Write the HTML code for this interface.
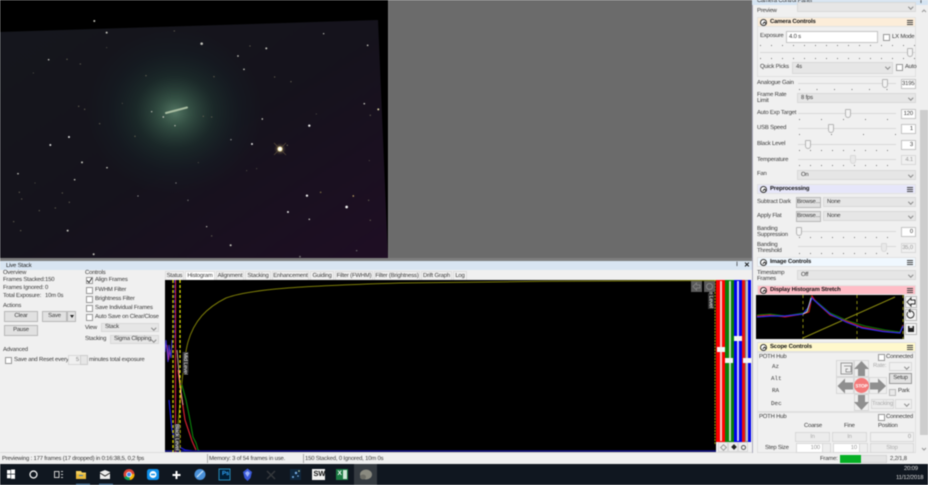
<!DOCTYPE html>
<html><head><meta charset="utf-8"><style>
html,body{margin:0;padding:0;background:#f0f0f0;}
#p{position:relative;width:928px;height:485px;overflow:hidden;background:#f0f0f0;font:5.9px/8px "Liberation Sans",sans-serif;letter-spacing:-.17px;color:#3a3a3a;text-rendering:geometricPrecision;filter:blur(.42px);}
#p div,#p span,#p svg{position:absolute;box-sizing:border-box;}
.t{white-space:nowrap;}
.b{font-weight:bold;color:#111;}
.m{font-family:"Liberation Mono",monospace;letter-spacing:0;}
.cb{background:#e6e6e6;border:1px solid #d8d8d8;padding-left:3px;line-height:8px;white-space:nowrap;}
.cb::after{content:"";position:absolute;right:3px;top:2px;width:2.5px;height:2.5px;border-right:1px solid #888;border-bottom:1px solid #888;transform:rotate(45deg);}
.in{background:#fff;border:1px solid #c4c4c4;text-align:right;padding-right:2px;line-height:8px;white-space:nowrap;}
.dis{background:#f0f0f0;border-color:#d8d8d8;color:#999;}
.btn{background:#e1e1e1;border:1px solid #b8b8b8;text-align:center;white-space:nowrap;}
.dbtn{background:#ececec;border:1px solid #d8d8d8;color:#aaa;text-align:center;line-height:8px;white-space:nowrap;}
.ck{width:7px;height:7px;background:#fff;border:1px solid #999;}
.tr{height:1px;background:#d8d8d8;}
.th{width:6px;height:9px;background:#f3f3f3;border:1px solid #b4b4b4;border-radius:1px 1px 3px 3px;}
.tk{height:1px;background:repeating-linear-gradient(90deg,#777 0 1px,transparent 1px 11px);}
.hd{left:757px;width:159px;height:10px;border:1px solid #e2e2e2;}
.hd .o{left:2px;top:1px;width:7px;height:7px;border:1px solid #333;border-radius:50%;background:#fff;}
.hd .o::after{content:"";position:absolute;left:1.5px;top:2px;width:2px;height:2px;border-left:1px solid #333;border-top:1px solid #333;transform:rotate(45deg);}
.hd .n{left:12px;top:0;line-height:8px;font-weight:bold;color:#111;white-space:nowrap;letter-spacing:-.12px;}
.hd .h{left:149px;top:2px;width:6px;height:5px;border-top:1px solid #444;border-bottom:1px solid #444;}
.hd .h::after{content:"";position:absolute;left:0;right:0;top:1px;height:1px;background:#444;}
.tab{top:271px;height:9px;background:#f0f0f0;border:1px solid #dedede;border-bottom:none;text-align:center;line-height:8px;white-space:nowrap;}
.box{border:1px solid #e0e0e0;}
.cell{background:#eee;border:1px solid #d8d8d8;}
</style></head><body><div id="p">

<!-- Image region -->
<svg style="left:0;top:0" width="389" height="258" viewBox="0 0 389 258">
<defs>
<linearGradient id="bg" x1="0" y1="0" x2="1" y2="1"><stop offset="0" stop-color="#15171d"/><stop offset=".5" stop-color="#15131c"/><stop offset="1" stop-color="#1f0e24"/></linearGradient>
<radialGradient id="glow" cx=".5" cy=".5" r=".5"><stop offset="0" stop-color="#567a66" stop-opacity=".95"/><stop offset=".18" stop-color="#3a5c4c" stop-opacity=".8"/><stop offset=".45" stop-color="#1f3832" stop-opacity=".55"/><stop offset=".75" stop-color="#15262a" stop-opacity=".25"/><stop offset="1" stop-color="#16282a" stop-opacity="0"/></radialGradient>
<radialGradient id="sg"><stop offset="0" stop-color="#fff6c0" stop-opacity=".55"/><stop offset="1" stop-color="#a08040" stop-opacity="0"/></radialGradient>
</defs>
<rect width="389" height="258" fill="#000"/>
<polygon points="0,32 378,20 388,258 0,258" fill="url(#bg)"/>
<ellipse cx="175" cy="112" rx="88" ry="82" fill="url(#glow)"/>
<line x1="166" y1="113" x2="187" y2="107.500" stroke="#a8bca0" stroke-width="2" stroke-linecap="round"/>
<g transform="scale(.3333)" fill="#c0c0b8">
<circle cx="283" cy="63" r="3"/><circle cx="320" cy="98" r="3"/><circle cx="605" cy="131" r="4"/><circle cx="799" cy="145" r="3"/><circle cx="146" cy="179" r="2.500"/><circle cx="714" cy="168" r="2.500"/><circle cx="732" cy="208" r="2.500"/><circle cx="1103" cy="136" r="2.500"/><circle cx="971" cy="101" r="2"/><circle cx="1093" cy="311" r="2.500"/><circle cx="1135" cy="328" r="3" fill="#d8d0a0"/><circle cx="787" cy="357" r="2.500"/><circle cx="928" cy="377" r="3.500" fill="#eee"/><circle cx="756" cy="432" r="3" fill="#ddd"/><circle cx="207" cy="411" r="3" fill="#ddd"/><circle cx="151" cy="435" r="3" fill="#ddd"/><circle cx="246" cy="487" r="3"/><circle cx="321" cy="503" r="2.500"/><circle cx="54" cy="521" r="2.500"/><circle cx="224" cy="539" r="2.500"/><circle cx="490" cy="351" r="2.500"/><circle cx="525" cy="377" r="2"/><circle cx="455" cy="335" r="2"/><circle cx="693" cy="419" r="2" fill="#999"/><circle cx="921" cy="587" r="3.500" fill="#eee"/><circle cx="1040" cy="621" r="4" fill="#f4f4f4"/><circle cx="864" cy="636" r="3" fill="#ddd"/><circle cx="928" cy="658" r="2.500"/><circle cx="1060" cy="588" r="2.500" fill="#b09860"/><circle cx="962" cy="577" r="2.500" fill="#706240"/><circle cx="203" cy="692" r="3"/><circle cx="281" cy="763" r="3"/><circle cx="692" cy="736" r="3"/><circle cx="620" cy="680" r="2"/><circle cx="414" cy="588" r="2" fill="#999"/><circle cx="528" cy="549" r="2" fill="#888"/><circle cx="564" cy="601" r="2" fill="#777"/><circle cx="1070" cy="752" r="2" fill="#777"/><circle cx="900" cy="770" r="2.500" fill="#777"/>
<g fill="#625e50"><circle cx="201" cy="178" r="2"/><circle cx="241" cy="192" r="2"/><circle cx="750" cy="138" r="2"/><circle cx="824" cy="231" r="2"/><circle cx="873" cy="245" r="2"/><circle cx="642" cy="230" r="2"/><circle cx="236" cy="319" r="2"/><circle cx="254" cy="328" r="2"/><circle cx="299" cy="371" r="2"/><circle cx="610" cy="349" r="2"/><circle cx="635" cy="351" r="2"/><circle cx="1111" cy="346" r="2"/><circle cx="862" cy="436" r="2"/><circle cx="1111" cy="661" r="2"/><circle cx="1106" cy="601" r="2"/><circle cx="635" cy="708" r="2"/><circle cx="187" cy="579" r="2"/><circle cx="58" cy="577" r="2"/><circle cx="65" cy="597" r="2"/><circle cx="41" cy="665" r="2"/><circle cx="62" cy="692" r="2"/><circle cx="166" cy="624" r="2"/><circle cx="118" cy="632" r="2"/><circle cx="208" cy="607" r="2"/><circle cx="438" cy="227" r="2"/><circle cx="523" cy="93" r="2"/><circle cx="405" cy="409" r="2"/><circle cx="100" cy="219" r="1.500"/><circle cx="105" cy="549" r="1.500"/><circle cx="320" cy="143" r="1.500"/><circle cx="367" cy="310" r="1.500"/><circle cx="595" cy="488" r="1.500"/><circle cx="740" cy="512" r="1.500"/><circle cx="770" cy="506" r="1.500"/><circle cx="1108" cy="482" r="1.500"/><circle cx="949" cy="342" r="1.500"/></g>
<circle cx="840" cy="447" r="18" fill="url(#sg)"/>
<path d="M822 429L858 465M858 429L822 465" stroke="#6a5c40" stroke-width="1.600"/>
<circle cx="840" cy="447" r="8" fill="#d8c880"/><circle cx="840" cy="447" r="5.500" fill="#fff"/>
</g>
</svg>
<div style="left:388px;top:0;width:364px;height:258px;background:#6b6b6b"></div>
<div style="left:388px;top:0;width:1px;height:258px;background:#777"></div>
<div style="left:0;top:258px;width:752px;height:3px;background:#7e7e7e"></div>

<!-- Live stack panel -->
<div style="left:0;top:261px;width:752px;height:9px;background:#d8e5f2"></div>
<div class="t" style="left:6px;top:262px;color:#222">Live Stack</div>
<div class="t b" style="left:736px;top:261px">⁞</div>
<div class="t b" style="left:744px;top:262px;font-size:7px">✕</div>

<div class="t" style="left:3px;top:269px">Overview</div>
<div class="t" style="left:3px;top:276px">Frames Stacked:</div><div class="t" style="left:45px;top:276px">150</div>
<div class="t" style="left:3px;top:284px">Frames Ignored:</div><div class="t" style="left:45px;top:284px">0</div>
<div class="t" style="left:3px;top:292px">Total Exposure:</div><div class="t" style="left:45px;top:292px">10m 0s</div>
<div class="t" style="left:3px;top:302px">Actions</div>
<div class="btn" style="left:4px;top:311px;width:34px;height:11px;line-height:9px">Clear</div>
<div class="btn" style="left:42px;top:311px;width:25px;height:11px;line-height:9px">Save</div>
<div class="btn" style="left:67px;top:311px;width:9px;height:11px"><span style="left:2px;top:3px;width:0;height:0;border:2.500px solid transparent;border-top:3px solid #222"></span></div>
<div class="btn" style="left:4px;top:325px;width:34px;height:11px;line-height:9px">Pause</div>
<div class="t" style="left:3px;top:346px">Advanced</div>
<div class="ck" style="left:5px;top:357px"></div>
<div class="t" style="left:14px;top:356px">Save and Reset every</div>
<div class="in dis" style="left:68px;top:355px;width:20px;height:10px;padding-right:8px;color:#888">5</div>
<div style="left:80px;top:355px;width:8px;height:10px;background:#e6e6e6;border:1px solid #ccc"></div>
<div class="t" style="left:89px;top:356px">minutes total exposure</div>

<div class="t" style="left:85px;top:269px">Controls</div>
<div class="ck" style="left:86px;top:277px"></div><div class="t" style="left:95px;top:276px">Align Frames</div>
<svg style="left:86px;top:277px" width="7" height="7"><path d="M1 3.500L3 5.500L6 1" fill="none" stroke="#333" stroke-width="1"/></svg>
<div class="ck" style="left:86px;top:287px"></div><div class="t" style="left:95px;top:286px">FWHM Filter</div>
<div class="ck" style="left:86px;top:296px"></div><div class="t" style="left:95px;top:295px">Brightness Filter</div>
<div class="ck" style="left:86px;top:305px"></div><div class="t" style="left:95px;top:304px">Save Individual Frames</div>
<div class="ck" style="left:86px;top:314px"></div><div class="t" style="left:95px;top:313px">Auto Save on Clear/Close</div>
<div class="t" style="left:85px;top:324px">View</div>
<div class="cb" style="left:101px;top:323px;width:58px;height:9px;line-height:7px">Stack</div>
<div class="t" style="left:85px;top:335px">Stacking</div>
<div class="cb" style="left:110px;top:335px;width:49px;height:9px;line-height:7px">Sigma Clipping</div>

<!-- Tabs -->
<div class="tab" style="left:165px;width:19px">Status</div>
<div class="tab" style="left:185px;width:30px;background:#fff">Histogram</div>
<div class="tab" style="left:216px;width:28px">Alignment</div>
<div class="tab" style="left:245px;width:26px">Stacking</div>
<div class="tab" style="left:272px;width:37px">Enhancement</div>
<div class="tab" style="left:310px;width:24px">Guiding</div>
<div class="tab" style="left:335px;width:38px">Filter (FWHM)</div>
<div class="tab" style="left:374px;width:46px">Filter (Brightness)</div>
<div class="tab" style="left:421px;width:31px">Drift Graph</div>
<div class="tab" style="left:453px;width:14px">Log</div>

<!-- Histogram -->
<div style="left:165px;top:280px;width:551px;height:172px;background:#000"></div>
<svg style="left:165px;top:280px" width="551" height="172" viewBox="165 280 551 172">
<path d="M176 452C179 410 183 360 188 342C194 321 206 308 226 298C250 289 300 286 400 283C500 281.500 620 280.500 716 280.500" fill="none" stroke="#7d7d08" stroke-width="1"/>
<path d="M165 352L166 340L168 362L169 345L171 358L172 340" fill="none" stroke="#3a2fd0" stroke-width="1"/>
<path d="M167 345L168.500 360L170 350" fill="none" stroke="#a030a0" stroke-width="1"/>
<path d="M169 400L172 430L176 445L185 450L192 451" fill="none" stroke="#1a1ae0" stroke-width="1.200"/>
<path d="M182 385L186 400L190 420L193 437L196 443L198 450L200 451" fill="none" stroke="#0a7a0a" stroke-width="1.200"/>
<path d="M178 370L181 393L185 420L189 432L192 441L196 450" fill="none" stroke="#d02030" stroke-width="1.200"/>
<path d="M177 350L180 385L183 405" fill="none" stroke="#e8c0b0" stroke-width=".8"/>
<line x1="165" y1="451" x2="716" y2="451" stroke="#1414a0" stroke-width="1.200"/>
<line x1="175.500" y1="280" x2="175.500" y2="452" stroke="#c81e3a" stroke-width="1.200"/>
<line x1="173" y1="280" x2="173" y2="452" stroke="#e6e600" stroke-width="1.200" stroke-dasharray="3 2"/>
<line x1="174.500" y1="280" x2="174.500" y2="340" stroke="#2020c0" stroke-width="1" stroke-dasharray="3 2"/>
<line x1="180" y1="280" x2="180" y2="452" stroke="#f0f000" stroke-width="1.200" stroke-dasharray="3 2"/>
<line x1="715" y1="280" x2="715" y2="445" stroke="#a0a000" stroke-width="1" stroke-dasharray="2 1"/>
<rect x="182.500" y="352" width="6" height="21" fill="#333"/>
<rect x="174" y="424" width="6" height="27" fill="#333"/>
<rect x="708" y="293" width="6" height="16" fill="#333"/>
<text transform="translate(184 352.500) rotate(90)" font-family="Liberation Sans" font-size="5.500" fill="#eee">Mid Level</text>
<text transform="translate(175.500 424) rotate(90)" font-family="Liberation Sans" font-size="5.500" fill="#eee">Black Level</text>
<text transform="translate(709.500 281) rotate(90)" font-family="Liberation Sans" font-size="5.500" fill="#eee">White Level</text>
<rect x="691" y="281" width="11" height="11" fill="#5a5a5a"/><rect x="704" y="281" width="11" height="11" fill="#5a5a5a"/>
<path d="M693 286.500L696.500 283L696.500 285L700 285L700 288L696.500 288L696.500 290Z" fill="none" stroke="#888" stroke-width=".8"/>
<circle cx="709.500" cy="286.500" r="3" fill="none" stroke="#888" stroke-width="1"/>
</svg>

<!-- Level sliders -->
<div style="left:716px;top:280px;width:36px;height:172px;background:#f0f0f0"></div>
<div style="left:716px;top:280px;width:9px;height:162px;background:#f00"></div>
<div style="left:725px;top:280px;width:9px;height:162px;background:#0a800a"></div>
<div style="left:734px;top:280px;width:8px;height:162px;background:#0000ee"></div>
<div style="left:742px;top:280px;width:3px;height:162px;background:#e81010"></div>
<div style="left:745px;top:280px;width:3px;height:162px;background:#808a80"></div>
<div style="left:748px;top:280px;width:3px;height:162px;background:#0000ee"></div>
<div style="left:719.500px;top:281px;width:2px;height:160px;background:#f4c8c8"></div>
<div style="left:728.500px;top:281px;width:2px;height:160px;background:#c0d8c0"></div>
<div style="left:737px;top:281px;width:2px;height:160px;background:#c4c4f4"></div>
<div style="left:745.500px;top:281px;width:2px;height:160px;background:#c8c8c8"></div>
<div style="left:717px;top:347px;width:8px;height:5px;background:#f4f4f4"></div>
<div style="left:725px;top:358px;width:8px;height:5px;background:#f4f4f4"></div>
<div style="left:734px;top:336px;width:8px;height:5px;background:#f4f4f4"></div>
<div style="left:743px;top:358px;width:8px;height:5px;background:#f4f4f4"></div>
<div class="cell" style="left:718px;top:442px;width:10px;height:10px"></div>
<div class="cell" style="left:728px;top:442px;width:10px;height:10px"></div>
<div class="cell" style="left:738px;top:442px;width:10px;height:10px"></div>
<div style="left:720.500px;top:444.500px;width:5px;height:5px;border:1px solid #999;transform:rotate(45deg)"></div>
<div style="left:731.500px;top:445px;width:4px;height:4px;background:#222;transform:rotate(45deg)"></div>
<div style="left:741px;top:444.500px;width:5px;height:5px;border:1px solid #555;border-radius:50%"></div>

<!-- Status bar left -->
<div style="left:0;top:452px;width:752px;height:12px;background:#f0f0f0;border-top:1px solid #ddd"></div>
<div class="t" style="left:2px;top:455px">Previewing : 177 frames (17 dropped) in 0:16:38,5, 0,2 fps</div>
<div style="left:207px;top:454px;width:1px;height:9px;background:#aaa"></div>
<div class="t" style="left:209px;top:455px">Memory: 3 of 54 frames in use.</div>
<div style="left:303px;top:454px;width:1px;height:9px;background:#aaa"></div>
<div class="t" style="left:305px;top:455px">150 Stacked, 0 Ignored, 10m 0s</div>

<!-- Right panel -->
<div style="left:752px;top:0;width:176px;height:464px;background:#f0f0f0;border-left:1px solid #aab"></div>
<div style="left:752px;top:0;width:176px;height:5px;background:#d5e4f2;overflow:hidden"><span class="t" style="left:5px;top:-3px;color:#222">Camera Control Panel</span></div>
<div class="t b" style="left:920px;top:-2px">⁞</div>
<!-- scrollbar -->
<div style="left:920px;top:5px;width:8px;height:450px;background:#efefef"></div>
<div style="left:920px;top:110px;width:8px;height:325px;background:#cdcdcd"></div>
<svg style="left:920px;top:5px" width="8" height="450"><path d="M2 7L4 5L6 7M2 443L4 445L6 443" fill="none" stroke="#999"/></svg>

<div class="t" style="left:757px;top:7px">Preview</div>
<div class="cb" style="left:797px;top:2px;width:119px;height:10px;color:#999"></div>

<!-- Camera controls -->
<div class="box" style="left:757px;top:17px;width:159px;height:60px"></div>
<div class="hd" style="top:17px;background:#fcedd9"><span class="o"></span><span class="n">Camera Controls</span><span class="h"></span></div>
<div class="t" style="left:760px;top:32px">Exposure</div>
<div class="in" style="left:786px;top:31px;width:92px;height:12px;text-align:left;padding-left:2px;line-height:10px">4.0 s</div>
<div class="ck" style="left:883px;top:34px"></div><div class="t" style="left:892px;top:33px">LX Mode</div>
<div class="tk" style="left:760px;top:45px;width:155px"></div>
<div class="tr" style="left:760px;top:52px;width:155px"></div>
<div class="tk" style="left:760px;top:58px;width:155px"></div>
<div class="th" style="left:907px;top:48px"></div>
<div class="t" style="left:760px;top:63px">Quick Picks</div>
<div class="cb" style="left:792px;top:62px;width:101px;height:12px;line-height:8px">4s</div>
<div class="ck" style="left:896px;top:64px"></div><div class="t" style="left:905px;top:63px">Auto</div>

<div class="t" style="left:757px;top:79px">Analogue Gain</div>
<div class="tr" style="left:798px;top:83px;width:98px"></div><div class="th" style="left:882px;top:79px"></div>
<div class="tk" style="left:799px;top:89px;width:98px;background:repeating-linear-gradient(90deg,#777 0 1px,transparent 1px 17.500px)"></div>
<div class="in" style="left:901px;top:79px;width:15px;height:10px">3195</div>

<div class="t" style="left:757px;top:91px">Frame Rate</div><div class="t" style="left:757px;top:97px">Limit</div>
<div class="cb" style="left:797px;top:93px;width:119px;height:10px">8 fps</div>

<div class="t" style="left:757px;top:109px">Auto Exp Target</div>
<div class="tr" style="left:798px;top:113px;width:98px"></div><div class="th" style="left:845px;top:109px"></div>
<div class="tk" style="left:799px;top:119px;width:98px;background:repeating-linear-gradient(90deg,#777 0 1px,transparent 1px 22px)"></div>
<div class="in" style="left:901px;top:109px;width:15px;height:10px">120</div>

<div class="t" style="left:757px;top:124px">USB Speed</div>
<div class="tr" style="left:798px;top:128px;width:98px"></div><div class="th" style="left:828px;top:124px"></div>
<div class="tk" style="left:799px;top:134px;width:98px;background:repeating-linear-gradient(90deg,#777 0 1px,transparent 1px 32px)"></div>
<div class="in" style="left:901px;top:124px;width:15px;height:10px">1</div>

<div class="t" style="left:757px;top:140px">Black Level</div>
<div class="tr" style="left:798px;top:144px;width:98px"></div><div class="th" style="left:805px;top:140px"></div>
<div class="tk" style="left:799px;top:150px;width:98px"></div>
<div class="in" style="left:901px;top:140px;width:15px;height:10px">3</div>

<div class="t" style="left:757px;top:156px">Temperature</div>
<div class="tr" style="left:798px;top:159px;width:98px"></div><div class="th" style="left:850px;top:155px;background:#e8e8e8;border-color:#d8d8d8"></div>
<div class="tk" style="left:799px;top:165px;width:98px"></div>
<div class="in dis" style="left:901px;top:155px;width:15px;height:10px">4.1</div>

<div class="t" style="left:757px;top:170px">Fan</div>
<div class="cb" style="left:797px;top:170px;width:119px;height:10px">On</div>

<!-- Preprocessing -->
<div class="hd" style="top:184px;background:#e6e6fa"><span class="o"></span><span class="n">Preprocessing</span><span class="h"></span></div>
<div class="t" style="left:757px;top:198px">Subtract Dark</div>
<div class="btn" style="left:796px;top:197px;width:25px;height:11px;line-height:9px">Browse...</div>
<div class="cb" style="left:823px;top:197px;width:93px;height:10px">None</div>
<div class="t" style="left:757px;top:212px">Apply Flat</div>
<div class="btn" style="left:796px;top:211px;width:25px;height:11px;line-height:9px">Browse...</div>
<div class="cb" style="left:823px;top:211px;width:93px;height:10px">None</div>
<div class="t" style="left:757px;top:225px">Banding</div><div class="t" style="left:757px;top:231px">Suppression</div>
<div class="tr" style="left:798px;top:231px;width:98px"></div><div class="th" style="left:796px;top:227px"></div>
<div class="tk" style="left:799px;top:237px;width:98px"></div>
<div class="in" style="left:901px;top:227px;width:15px;height:10px">0</div>
<div class="t" style="left:757px;top:241px">Banding</div><div class="t" style="left:757px;top:247px">Threshold</div>
<div class="tr" style="left:798px;top:246px;width:98px"></div><div class="th" style="left:881px;top:243px;background:#e8e8e8;border-color:#d8d8d8"></div>
<div class="tk" style="left:799px;top:253px;width:98px"></div>
<div class="in dis" style="left:901px;top:243px;width:15px;height:10px">35,0</div>

<!-- Image controls -->
<div class="hd" style="top:257px;background:#f0f8ff"><span class="o"></span><span class="n">Image Controls</span><span class="h"></span></div>
<div class="t" style="left:757px;top:269px">Timestamp</div><div class="t" style="left:757px;top:275px">Frames</div>
<div class="cb" style="left:797px;top:270px;width:119px;height:10px">Off</div>

<!-- Display hist -->
<div class="hd" style="top:285px;background:#ffbdc6"><span class="o" style="background:#ffeaea"></span><span class="n">Display Histogram Stretch</span><span class="h"></span></div>
<svg style="left:756px;top:295px" width="148" height="44" viewBox="756 295 148 44">
<rect x="756" y="295" width="148" height="44" fill="#000"/>
<line x1="803" y1="295" x2="803" y2="339" stroke="#8c8c10" stroke-dasharray="3 3"/>
<line x1="857" y1="295" x2="857" y2="339" stroke="#8c8c10" stroke-dasharray="3 3"/>
<line x1="903" y1="295" x2="903" y2="339" stroke="#8c8c10" stroke-dasharray="3 3"/>
<path d="M803 338L895 297" stroke="#8c8c10" fill="none"/>
<path d="M757 315L770 314L785 316L803 313L808 311L811 297L816 301L830 313L848 321L865 326L885 330L900 332L903 325" fill="none" stroke="#0a7a0a" stroke-width="1"/>
<path d="M757 316L770 315L785 317L803 314L809 312L812 296L817 303L830 315L846 321L862 327L883 331L900 333L903 325" fill="none" stroke="#e01010" stroke-width="1"/>
<path d="M757 317L770 316L785 316L803 314L808 308L812 298L815 301L830 314L846 322L862 328L883 331.500L900 333L903 326" fill="none" stroke="#2a2af0" stroke-width="1.200"/>
<path d="M803 314L807 312L811 298" fill="none" stroke="#ddd" stroke-width=".8"/>
</svg>
<div class="btn" style="left:905px;top:296px;width:12px;height:12px;background:#f4f4f4"></div>
<div class="btn" style="left:905px;top:309px;width:12px;height:12px;background:#f4f4f4"></div>
<div class="btn" style="left:905px;top:323px;width:12px;height:12px;background:#f4f4f4"></div>
<svg style="left:905px;top:296px" width="12" height="40" viewBox="0 0 12 40">
<path d="M2 6L6 2L6 4L10 4L10 8L6 8L6 10Z" fill="none" stroke="#333"/>
<path d="M3 16A3.500 3.500 0 1 0 6 15L4 15M5.500 13L3.800 15L5.500 16.500" fill="none" stroke="#333"/>
<rect x="3" y="30" width="6" height="6" fill="#222"/><rect x="4.500" y="30" width="3" height="2" fill="#ddd"/>
</svg>

<!-- Scope -->
<div class="hd" style="top:342px;background:#fff8cc"><span class="o"></span><span class="n">Scope Controls</span><span class="h"></span></div>
<div class="box" style="left:757px;top:352px;width:159px;height:60px"></div>
<div class="t" style="left:759px;top:353px">POTH Hub</div>
<div class="ck" style="left:878px;top:354px"></div><div class="t" style="left:886px;top:353px">Connected</div>
<div class="t m" style="left:772px;top:363px">Az</div>
<div class="t m" style="left:771px;top:375px">Alt</div>
<div class="t m" style="left:772px;top:387px">RA</div>
<div class="t m" style="left:771px;top:400px">Dec</div>
<div class="cell" style="left:836px;top:360px;width:18px;height:17px"></div>
<div class="cell" style="left:854px;top:360px;width:15px;height:17px"></div>
<div class="cell" style="left:836px;top:377px;width:18px;height:17px"></div>
<div class="cell" style="left:854px;top:377px;width:15px;height:17px"></div>
<div class="cell" style="left:869px;top:377px;width:18px;height:17px"></div>
<div class="cell" style="left:854px;top:394px;width:15px;height:17px"></div>
<svg style="left:836px;top:360px" width="52" height="51" viewBox="836 360 52 51">
<path d="M841 363h11v11h-11zM844 366h7v6h-5v-3h2" fill="none" stroke="#999" stroke-width="1"/>
<path d="M861.500 361L869 369H865V376H858V369H854Z" fill="#8f8f8f"/>
<path d="M861.500 410L869 402H865V395H858V402H854Z" fill="#8f8f8f"/>
<path d="M837.500 386L845 378.500V382.500H853V389.500H845V393.500Z" fill="#8f8f8f"/>
<path d="M886 386L878 378.500V382.500H870V389.500H878V393.500Z" fill="#8f8f8f"/>
<circle cx="861.500" cy="385.500" r="7.500" fill="#f47a7a"/>
<text x="861.500" y="387.500" font-family="Liberation Sans" font-size="4.800" font-weight="bold" text-anchor="middle" fill="#fff">STOP</text>
</svg>
<div class="t" style="left:873px;top:362px;color:#aaa">Rate:</div>
<div class="cb dis" style="left:889px;top:362px;width:23px;height:9px"></div>
<div class="btn" style="left:889px;top:373px;width:23px;height:11px;line-height:9px;border-color:#999">Setup</div>
<div class="ck" style="left:889px;top:389px;background:#e8e8e8;border-color:#bbb"></div><div class="t" style="left:898px;top:387px">Park</div>
<div class="dbtn" style="left:871px;top:399px;width:23px;height:10px">Tracking</div>
<div class="cb dis" style="left:895px;top:399px;width:17px;height:10px"></div>

<div class="box" style="left:757px;top:412px;width:159px;height:41px"></div>
<div class="t" style="left:759px;top:413px">POTH Hub</div>
<div class="ck" style="left:878px;top:414px"></div><div class="t" style="left:886px;top:413px">Connected</div>
<div class="t" style="left:804px;top:422px">Coarse</div>
<div class="t" style="left:844px;top:422px">Fine</div>
<div class="t" style="left:878px;top:422px">Position</div>
<div class="dbtn" style="left:795px;top:432px;width:35px;height:10px">In</div>
<div class="dbtn" style="left:832px;top:432px;width:35px;height:10px">In</div>
<div class="in dis" style="left:870px;top:432px;width:44px;height:10px">0</div>
<div class="t" style="left:765px;top:444px">Step Size</div>
<div class="in dis" style="left:796px;top:443px;width:35px;height:10px;background:#fff;padding-right:10px">100</div>
<div class="cell" style="left:822px;top:443px;width:9px;height:10px"></div>
<div class="in dis" style="left:833px;top:443px;width:35px;height:10px;background:#fff;padding-right:10px">10</div>
<div class="cell" style="left:859px;top:443px;width:9px;height:10px"></div>
<div class="dbtn" style="left:870px;top:443px;width:44px;height:10px">Stop</div>

<!-- status right -->
<div style="left:752px;top:453px;width:176px;height:11px;background:#f0f0f0"></div>
<div class="t" style="left:820px;top:455px">Frame:</div>
<div style="left:840px;top:455px;width:47px;height:8px;background:#e4e4e4;border:1px solid #d4d4d4"></div>
<div style="left:840px;top:455px;width:21px;height:8px;background:#06b025"></div>
<div class="t" style="left:890px;top:455px">2,2/1,8</div>

<!-- Taskbar -->
<div style="left:0;top:464px;width:928px;height:21px;background:#101720"></div>
<div style="left:354px;top:464px;width:23px;height:21px;background:#343a40"></div>
<svg style="left:0;top:464px" width="400" height="21" viewBox="0 0 400 21">
<g fill="#fff"><rect x="7" y="6" width="3.500" height="3.800"/><rect x="11" y="5.500" width="4" height="4.300"/><rect x="7" y="10.500" width="3.500" height="3.800"/><rect x="11" y="10.500" width="4" height="4.300"/></g>
<circle cx="33.500" cy="10.500" r="3.500" fill="none" stroke="#fff" stroke-width="1.200"/>
<g fill="none" stroke="#ccc" stroke-width="1"><rect x="54.500" y="7.500" width="4.500" height="6"/><path d="M61 7.500H63M61 10.500H63M61 13.500H63"/></g>
<path d="M76 7H81L82 8.500H86V15H76Z" fill="#f5cf5b"/><rect x="76" y="10" width="10" height="5" fill="#e8b93a"/><rect x="79" y="11" width="4" height="1" fill="#3a78c0"/>
<rect x="76" y="19.500" width="14" height="1.500" fill="#3a5f80"/>
<path d="M100 8L105 6L110 8V15H100Z" fill="#eee"/><path d="M100 9L105 12L110 9" fill="none" stroke="#222"/>
<rect x="99" y="19.500" width="14" height="1.500" fill="#3a5f80"/>
<circle cx="129" cy="10.500" r="5.500" fill="#db4437"/><path d="M129 10.500L124 13.500A5.500 5.500 0 0 0 130 16Z" fill="#0f9d58"/><path d="M129 10.500L134.500 10A5.500 5.500 0 0 1 130 16Z" fill="#f4b400"/><circle cx="129" cy="10.500" r="2.400" fill="#4285f4" stroke="#fff" stroke-width=".8"/>
<rect x="147" y="5" width="12" height="11" rx="2.500" fill="#0e8ee9"/><circle cx="153" cy="10.500" r="3.500" fill="#fff"/><path d="M151 10.500H155" stroke="#0e8ee9" stroke-width="1.500"/>
<path d="M175.500 7H177.500V10H180.500V12H177.500V15H175.500V12H172.500V10H175.500Z" fill="#fff"/>
<circle cx="200" cy="10.500" r="5.500" fill="#4a90d8"/><path d="M197 13L203 7" stroke="#bcdcf8" stroke-width="1.300"/>
<rect x="219" y="5" width="11" height="11" fill="#001e36" stroke="#2fa3d8" stroke-width=".8"/>
<path d="M247.500 4.500L252 8L250.500 14L247.500 17L244.500 14L243 8Z" fill="#3a58d8"/><path d="M247.500 7L250 9L247.500 13L245 9Z" fill="#9ab0f8"/>
<path d="M267 7L275 15M275 7L267 15" stroke="#34383c" stroke-width="1.500"/>
<rect x="290" y="5" width="11" height="11" fill="#10283e"/><circle cx="293" cy="13" r="1" fill="#7ab0e8"/><circle cx="296" cy="9" r="1.200" fill="#7ab0e8"/><circle cx="299" cy="7" r=".8" fill="#c8d8a0"/><circle cx="298" cy="12" r=".8" fill="#7ab0e8"/>
<rect x="312" y="5" width="13" height="11" fill="#f2f2f2"/>
<rect x="336" y="5" width="12" height="11" fill="#1b7a42"/><rect x="343" y="6" width="4" height="9" fill="#cfe8d8"/>
<ellipse cx="366" cy="10.500" rx="6" ry="5" fill="#8a8a80"/><ellipse cx="363" cy="13" rx="3" ry="2.500" fill="#6d6d66"/>
</svg>
<div class="t" style="left:313.500px;top:470px;font-weight:bold;color:#111;font-size:7.500px;">SW</div>
<div class="t" style="left:222px;top:470px;color:#31a8ff;font-size:6px;font-weight:bold">Ps</div>
<div class="t" style="left:337.500px;top:470px;color:#fff;font-size:6.500px;font-weight:bold">X</div>
<div class="t" style="left:904px;top:465px;color:#ddd">20:09</div>
<div class="t" style="left:896px;top:474px;color:#ddd">11/12/2018</div>

</div></body></html>
